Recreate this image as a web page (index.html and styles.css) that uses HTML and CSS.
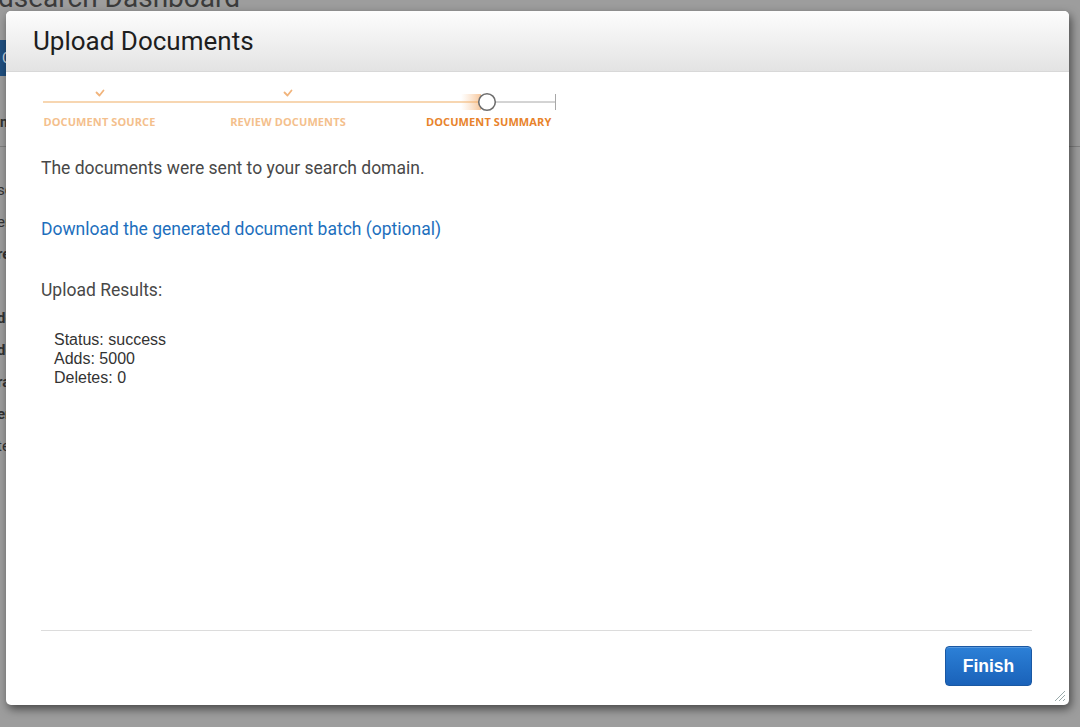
FILE: index.html
```html
<!DOCTYPE html>
<html>
<head>
<meta charset="utf-8">
<link rel="stylesheet" href="styles.css">
</head>
<body>
<div class="page">
  <h1 class="page-title">dsearch Dashboard</h1>
  <div class="page-btn">Create</div>
  <div class="page-tab">Info</div>
  <ul class="page-list">
    <li>search</li>
    <li>endpoint</li>
    <li class="b">region</li>
    <li>l</li>
    <li class="b">domain</li>
    <li class="b">docs</li>
    <li class="b">rank</li>
    <li class="b">engine</li>
    <li>test</li>
  </ul>
</div>

<div class="dialog">
  <div class="dialog-header">
    <h2 class="dialog-title">Upload Documents</h2>
  </div>
  <div class="dialog-body">
    <div class="content">
      <div class="stepper">
        <svg class="stepper-track" width="514" height="24" viewBox="0 0 514 24">
          <defs>
            <linearGradient id="glow" x1="0" x2="1" y1="0" y2="0">
              <stop offset="0" stop-color="#f5c08c" stop-opacity="0"/>
              <stop offset="1" stop-color="#f3a560" stop-opacity="0.9"/>
            </linearGradient>
          </defs>
          <path d="M53.5 4.5 L56.5 7.5 L60.5 2.5" fill="none" stroke="#f1b47c" stroke-width="1.8" stroke-linecap="round" stroke-linejoin="round"/>
          <path d="M241.5 4.5 L244.5 7.5 L248.5 2.5" fill="none" stroke="#f1b47c" stroke-width="1.8" stroke-linecap="round" stroke-linejoin="round"/>
          <line x1="0" y1="14" x2="440" y2="14" stroke="#f5c897" stroke-width="1.5"/>
          <rect x="418" y="6" width="20" height="16" fill="url(#glow)" opacity="0.7"/>
          <line x1="453" y1="14" x2="512" y2="14" stroke="#a8a8a8" stroke-width="1"/>
          <line x1="512.5" y1="6" x2="512.5" y2="22" stroke="#a8a8a8" stroke-width="1"/>
          <circle cx="444" cy="14" r="8.3" fill="#fff" stroke="#6f6f6f" stroke-width="1.6"/>
        </svg>
        <div class="stepper-labels">
          <span class="step done s1">DOCUMENT SOURCE</span>
          <span class="step done s2">REVIEW DOCUMENTS</span>
          <span class="step current s3">DOCUMENT SUMMARY</span>
        </div>
      </div>

      <p class="msg">The documents were sent to your search domain.</p>
      <p class="msg"><a class="link" href="#">Download the generated document batch (optional)</a></p>
      <p class="msg">Upload Results:</p>
      <div class="results">
        <div>Status: success</div>
        <div>Adds: 5000</div>
        <div>Deletes: 0</div>
      </div>
    </div>
    <div class="footer">
      <button class="btn-primary">Finish</button>
    </div>
  </div>
  <svg class="grip" width="14" height="14" viewBox="0 0 14 14">
    <path d="M13 3 L3 13 M13 7 L7 13 M13 11 L11 13" stroke="#9aa" stroke-width="1"/>
  </svg>
</div>
</body>
</html>
```

FILE: styles.css
```css
html, body {
  margin: 0;
  padding: 0;
  height: 100%;
  overflow: hidden;
}

body {
  background: #9d9d9d;
  font-family: Roboto, "Liberation Sans", sans-serif;
}

.page {
  padding: 0;
  color: #2f2f2f;
}

.page-title {
  margin: -16px 0 0 -2px;
  font-family: Roboto, sans-serif;
  font-weight: 400;
  font-size: 28px;
  line-height: 28px;
  color: #3b3b3b;
}

.page-btn {
  margin-top: 28px;
  width: 60px;
  height: 36px;
  background: #1f4f80;
  color: #cfd8e0;
  font-size: 14px;
  line-height: 36px;
  padding-left: 2px;
}

.page-tab {
  margin-top: 38px;
  height: 32px;
  border-bottom: 1px solid #808080;
  font-size: 14px;
  font-weight: 700;
  color: #333;
  text-indent: -4px;
}

.page-list {
  list-style: none;
  margin: 34px 0 0 -3px;
  padding: 0;
  font-size: 15px;
  color: #333;
}

.page-list li {
  height: 32px;
}

.page-list li.b {
  font-weight: 700;
}

.dialog {
  position: absolute;
  left: 6px;
  top: 11px;
  width: 1063px;
  height: 694px;
  background: #fff;
  border-radius: 5px;
  box-shadow: 2px 4px 10px rgba(0, 0, 0, 0.55);
  display: flex;
  flex-direction: column;
  overflow: hidden;
}

.dialog-header {
  height: 61px;
  flex: none;
  background: linear-gradient(#fdfdfd, #e3e3e3);
  border-bottom: 1px solid #d8d8d8;
  box-sizing: border-box;
  padding-left: 27px;
  display: flex;
  align-items: center;
}

.dialog-title {
  margin: 0;
  font-family: Roboto, sans-serif;
  font-weight: 400;
  font-size: 26px;
  color: #1e1e1e;
}

.dialog-body {
  flex: 1;
  display: flex;
  flex-direction: column;
  padding: 0 37px 0 35px;
}

.content {
  flex: 1;
}

.stepper {
  margin-top: 16px;
  margin-left: 2px;
}

.stepper-track {
  display: block;
}

.stepper-labels {
  display: flex;
  margin-top: 3px;
  font-family: "Open Sans", sans-serif;
  font-weight: 700;
  font-size: 11px;
  line-height: 14px;
  letter-spacing: 0.1px;
}

.step {
  display: block;
  text-align: center;
  white-space: nowrap;
}

.step.done {
  color: #f4bf8d;
}

.step.current {
  color: #e8832b;
}

.s1 { width: 113px; }
.s2 { width: 116px; margin-left: 74px; }
.s3 { width: 124px; margin-left: 80px; }

.msg {
  margin: 0;
  font-size: 17.5px;
  line-height: 20px;
  color: #484848;
}

.stepper + .msg {
  margin-top: 29px;
}

.msg + .msg {
  margin-top: 41px;
}

.link {
  color: #1d6fbd;
  text-decoration: none;
}

.results {
  margin-top: 30px;
  padding-left: 13px;
  font-family: "Liberation Sans", Arial, sans-serif;
  font-size: 16px;
  line-height: 19px;
  color: #333;
}

.footer {
  flex: none;
  border-top: 1px solid #dcdcdc;
  padding: 15px 0 19px;
  display: flex;
  justify-content: flex-end;
}

.btn-primary {
  width: 87px;
  height: 40px;
  border: 1px solid #1a58a3;
  border-radius: 4px;
  background: linear-gradient(#2c80d7, #1a62b9);
  color: #fff;
  font-family: "Liberation Sans", Arial, sans-serif;
  font-weight: 700;
  font-size: 17.5px;
  padding: 0;
  box-shadow: inset 0 1px 0 rgba(255, 255, 255, 0.2);
}

.grip {
  position: absolute;
  right: 3px;
  bottom: 3px;
}
```
